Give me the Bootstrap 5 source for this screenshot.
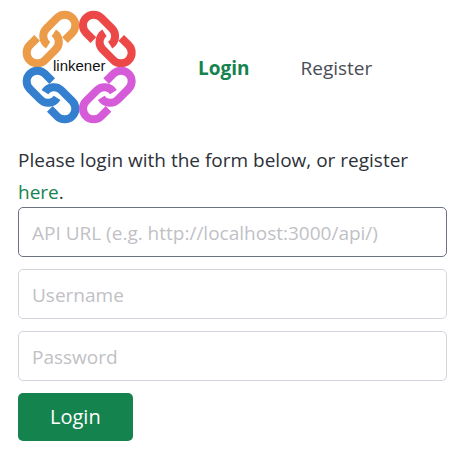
<!DOCTYPE html>
<html lang="en">
<head>
<meta charset="utf-8">
<meta name="viewport" content="width=device-width, initial-scale=1">
<title>linkener</title>
<link href="https://cdn.jsdelivr.net/npm/bootstrap@5.3.0/dist/css/bootstrap.min.css" rel="stylesheet">
<style>
body { font-family: "Open Sans", "Noto Sans", sans-serif; font-size: 19px; line-height: 32px; color: #2d3138; background: #fff; }
.page { padding: 10px 13px 12px 18px; }
.site-header { margin-bottom: 20px; }
.logo { width: 114px; height: 114px; margin-left: 4px; }
.logo text { font: 45px "Liberation Sans", sans-serif; fill: #111; }
.site-nav { gap: 51px; margin-left: 62px; padding-top: 2px; }
.site-nav a { color: #4a4d55; }
.site-nav a.active, .here { color: #15834e; }
.intro { margin-bottom: -1px; }
.fields { gap: 12px; }
.field { height: 50px; padding: 2px 13px 0; font-size: 19px; border: 1px solid #d2d5dc; border-radius: 5px; }
.field::placeholder { color: #bfc1c5; }
.field.current { border-color: #6b7280; }
.submit { height: 48px; padding: 0 32px; font-size: 20px; color: #fff; background: #15834e; border: 0; border-radius: 5px; }
.submit:hover { color: #fff; background: #106b3f; }
</style>
<script src="https://cdn.jsdelivr.net/npm/bootstrap@5.3.0/dist/js/bootstrap.bundle.min.js"></script>
</head>
<body>
<div class="page">
  <header class="site-header d-flex align-items-center">
    <a href="#" class="d-flex" aria-label="linkener home">
      <svg class="logo" viewBox="-2 -2 342 342" fill="none">
        <defs>
          <path id="half" d="M27 32H58A32 32 0 0 0 58 -32H12A32 32 0 0 0 -19 7" stroke-width="24"/>
          <g id="chain"><use href="#half"/><use href="#half" transform="rotate(180)"/></g>
        </defs>
        <use href="#chain" stroke="#ec9b48" transform="translate(85 85) rotate(-45)"/>
        <use href="#chain" stroke="#ec4848" transform="translate(254 85) scale(-1 1) rotate(-45)"/>
        <use href="#chain" stroke="#3480cf" transform="translate(85 253) rotate(45)"/>
        <use href="#chain" stroke="#d65bd8" transform="translate(254 253) scale(-1 1) rotate(45)"/>
        <text x="91" y="181">linkener</text>
      </svg>
    </a>
    <nav class="site-nav d-flex">
      <a href="#" class="active fw-bold text-decoration-none" aria-current="page">Login</a>
      <a href="#" class="text-decoration-none">Register</a>
    </nav>
  </header>
  <main>
    <p class="intro">Please login with the form below, or register <a href="#" class="here text-decoration-none">here</a>.</p>
    <form class="fields d-flex flex-column align-items-start">
      <input class="field current form-control shadow-none" type="url" aria-label="API URL" placeholder="API URL (e.g. http://localhost:3000/api/)">
      <input class="field form-control shadow-none" type="text" aria-label="Username" placeholder="Username">
      <input class="field form-control shadow-none" type="password" aria-label="Password" placeholder="Password">
      <button class="submit btn" type="button">Login</button>
    </form>
  </main>
</div>
</body>
</html>
